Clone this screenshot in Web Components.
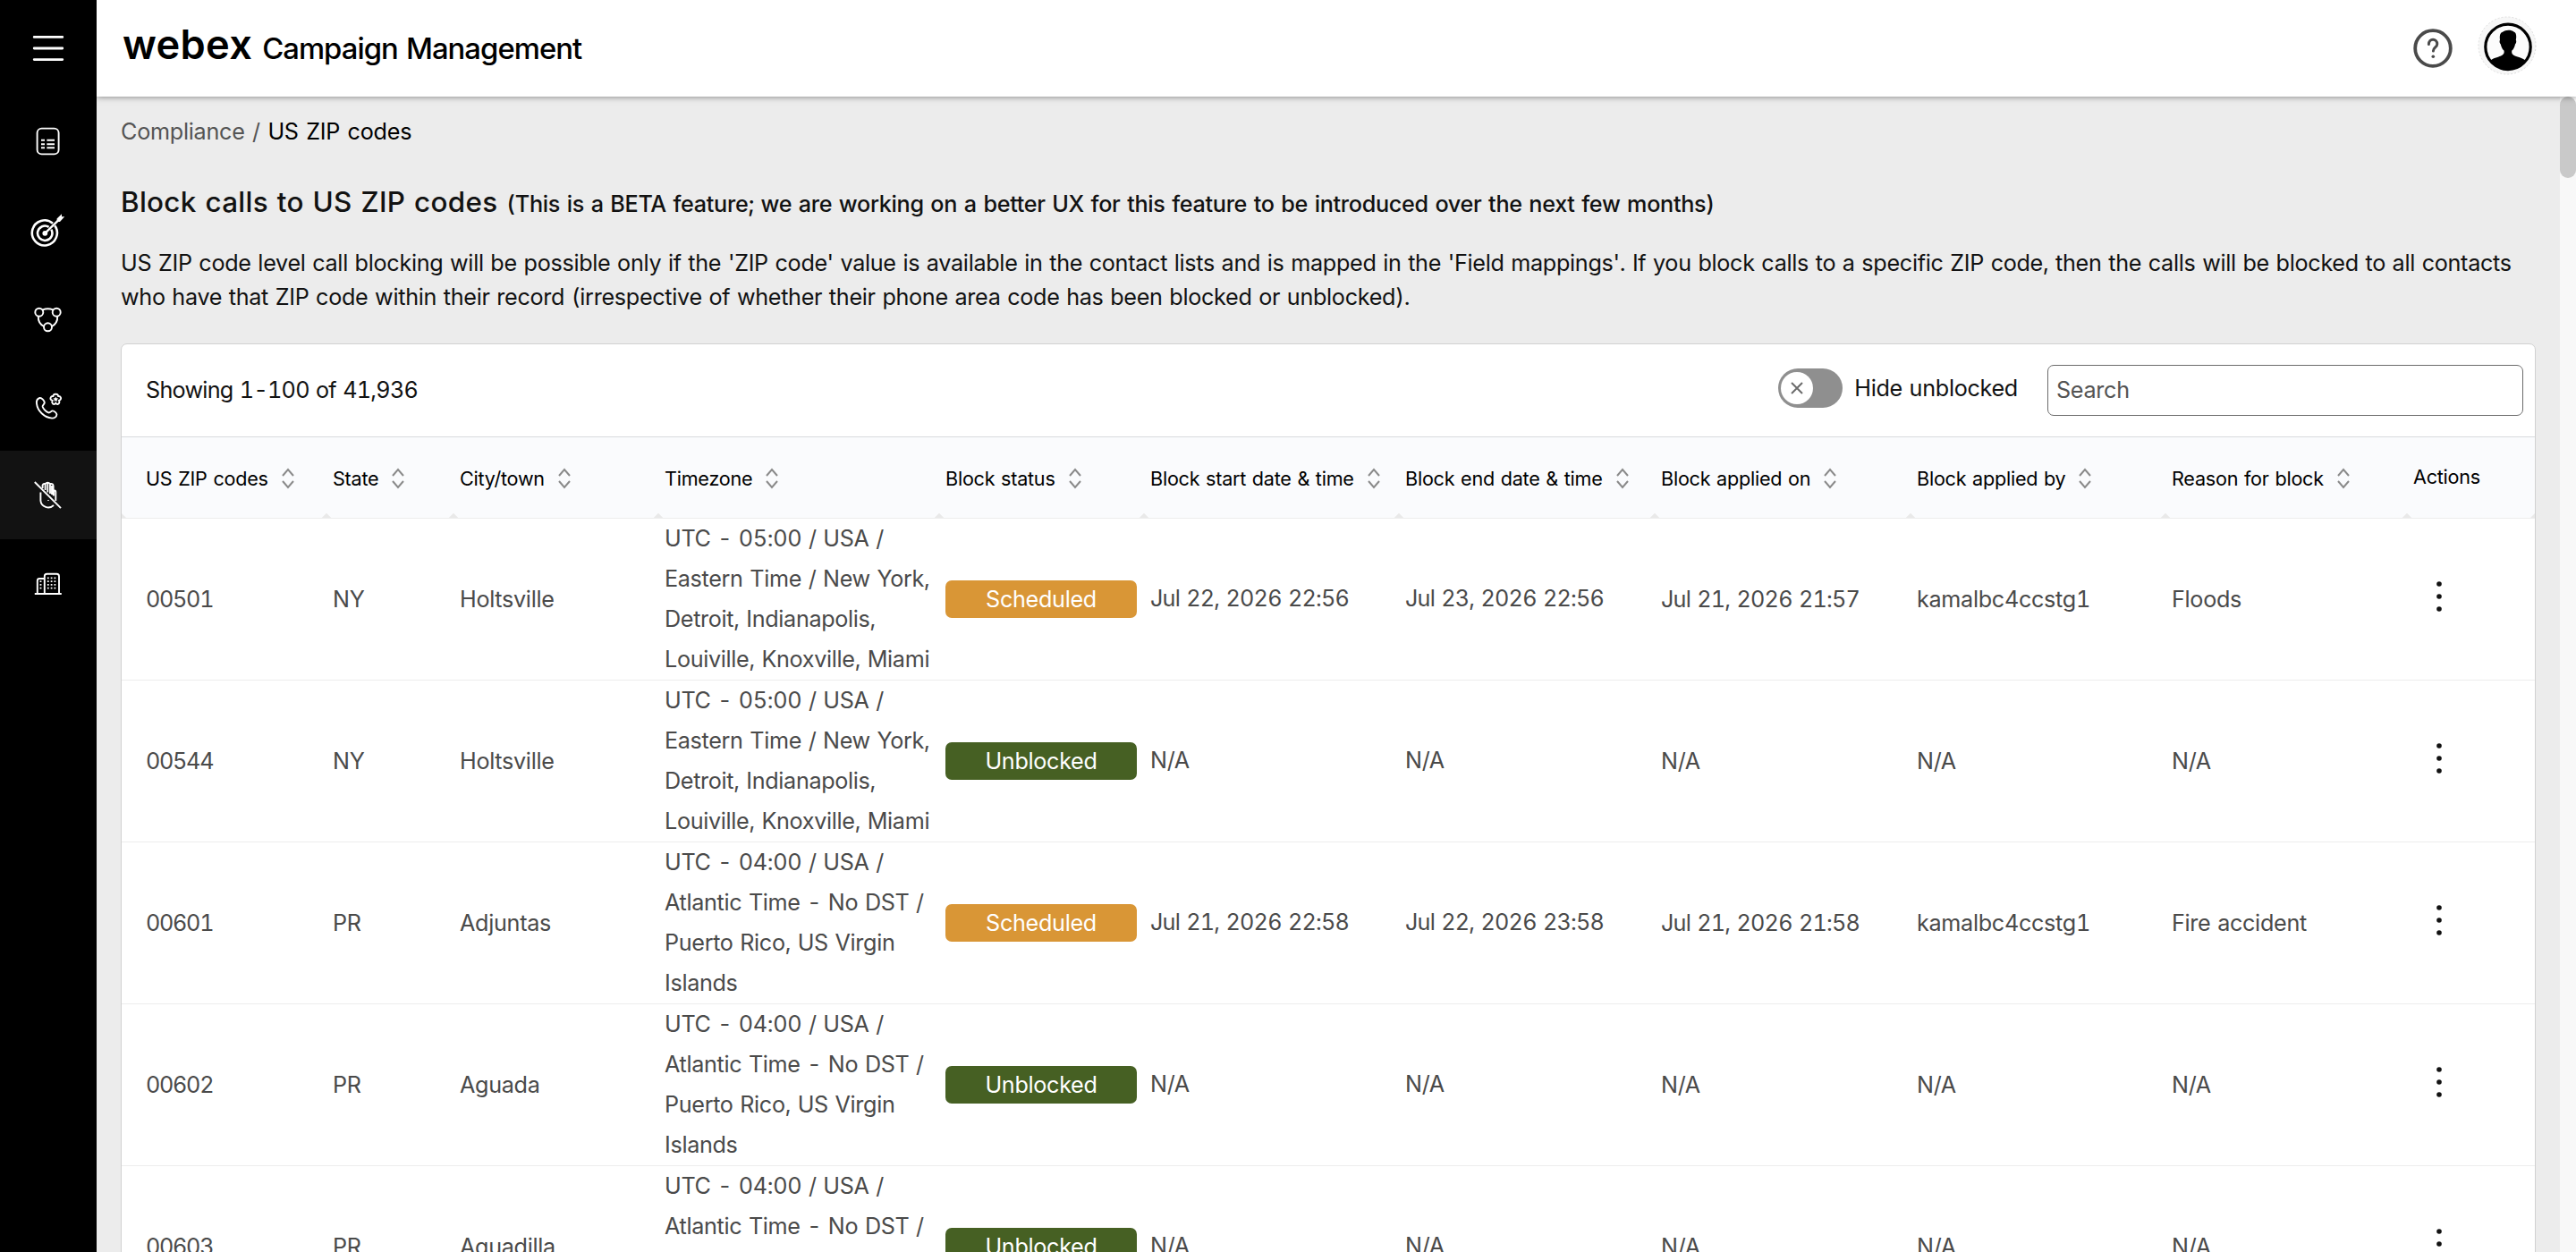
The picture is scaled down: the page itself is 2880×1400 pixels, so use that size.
<!DOCTYPE html>
<html lang="en">
<head>
<meta charset="utf-8">
<title>Webex Campaign Management</title>
<style>
  html, body {
    margin: 0;
    height: 100%;
    overflow: hidden;
    font-family: Inter, "Liberation Sans", sans-serif;
    font-size: 25.2px;
    font-variant-numeric: tabular-nums;
    letter-spacing: -0.31px;
    word-spacing: 1.2px;
    color: #121212;
  }
</style>
</head>
<body>
<campaign-shell></campaign-shell>

<script>
const icons = {
  survey: `
    <rect x="7.6" y="5.6" width="24" height="28.8" rx="5"/>
    <path d="M12 18.8h4M18.4 18.8h8.6M12 23.2h4M18.4 23.2h8.6M12 27.3h4M18.4 27.3h8.6"/>`,
  target: `
    <path stroke-width="2.6" d="M25 12.8A14 14 0 1 0 27.2 15.2"/>
    <path stroke-width="2.6" d="M20.6 16.8A8.2 8.2 0 1 0 23.3 19.6"/>
    <circle cx="16.3" cy="23.8" r="2.9" fill="#fff" stroke="none"/>
    <path stroke-width="2.4" d="M16.3 23.8L32 8.6"/>
    <path fill="#fff" stroke="none" d="M29.6 11V7.6L35 2.2V5.2H38.2L33 11Z"/>`,
  flow: `
    <circle cx="9.8" cy="13.2" r="4.5"/>
    <circle cx="29.2" cy="13.2" r="4.5"/>
    <circle cx="19.5" cy="29.8" r="4.5"/>
    <path d="M13.8 10.4Q19.5 8 25.2 10.4M8.8 17.8Q8.4 25.4 15 29M30.2 17.8Q30.6 25.4 24 29"/>`,
  phone: `
    <path d="M10.4 10C7.6 10.8 6.6 13.2 7 16.4C8 24.6 15.4 31.8 24 32.6C27 32.8 29.2 31 29.4 28.6C29.4 27 26.6 24.4 24.8 24.4C23 24.4 22.4 26.8 20.2 26.4C17.4 25.6 14.4 22.2 13.6 19.8C13.2 17.8 15.8 17 15.8 15.2C15.6 13 12.6 9.6 10.4 10Z"/>
    <path d="M28.3 5.8C30.2 5.6 31 7 31.2 8C33.4 7.8 34.6 9.8 34 11C33.6 12.4 32.6 12.6 32 12.8C33 15 32 16.8 30.4 17C29.4 17 28.8 16.6 28.3 15.8C27.4 17 26.2 17.2 25 16.4C24 15.4 24 14 24.6 12.8C22.4 12.2 22 10.6 22.8 9.2C23.4 8 24.4 7.8 25.4 8C25.6 6.8 26.6 5.6 28.3 5.8Z"/>
    <path fill="#fff" stroke="none" d="M28.3 8.4l.9 1.9 2 .3-1.5 1.4.4 2-1.8-1-1.8 1 .4-2-1.5-1.4 2-.3z"/>`,
  blocked: `
    <path d="M4.8 5L34 34.2"/>
    <path d="M11.4 16.5V26A8.6 8.2 0 0 0 26 31M28.3 26V16Q28 14 26 14.4V20.5"/>
    <path d="M13.6 12V8.4Q14.6 6.4 16.8 7.4M16.6 14V7Q19.3 4.2 22 7V18M19.3 6V16.6M22 7.2Q25.6 6.4 25.6 9.4V20M24 9V19"/>
    <path d="M20 25v1" stroke-width="1.6"/>`,
  building: `
    <path d="M4.8 31H34.8M7.8 31V16.4Q7.8 14 10.2 14H15.6M15.8 31V11.4Q15.8 8.8 18.4 8.8H29.4Q32 8.8 32 11.4V31"/>
    <path stroke-width="1.8" stroke-dasharray="1.8 2" d="M11.5 16.2V26M19.8 12.4V26M23.6 12.4V26M27.4 12.4V26"/>`
};

customElements.define('nav-item', class NavItem extends HTMLElement {
  constructor() {
    super();
    this.attachShadow({mode: 'open'});
  }
  connectedCallback() {
    this.shadowRoot.innerHTML = `<style>
      :host {
        display: flex;
        height: 99px;
        align-items: center;
        justify-content: center;
      }
      :host([active]) {
        background: #121212;
      }
      svg {
        width: 40px;
        height: 40px;
        fill: none;
        stroke: #fff;
        stroke-width: 1.9;
      }
    </style>
    <svg viewBox="0 0 40 40">${icons[this.getAttribute('icon')]}</svg>
    `;
  }
});

customElements.define('side-nav', class SideNav extends HTMLElement {
  constructor() {
    super();
    this.attachShadow({mode: 'open'});
    this.shadowRoot.innerHTML = this.template;
  }
  get template() {
    return `<style>
      :host {
        display: flex;
        flex-direction: column;
        flex: none;
        width: 108px;
        background: #000;
      }
      .menu {
        display: flex;
        height: 108px;
        align-items: center;
        justify-content: center;
      }
    </style>
    <span class="menu">
      <svg width="36" height="30" stroke="#fff" stroke-width="2.8" stroke-linecap="round"><path d="M2.2 2.4h31.6M2.2 15h31.6M2.2 27.6h31.6"/></svg>
    </span>
    <nav-item icon="survey"></nav-item>
    <nav-item icon="target"></nav-item>
    <nav-item icon="flow"></nav-item>
    <nav-item icon="phone"></nav-item>
    <nav-item icon="blocked" active></nav-item>
    <nav-item icon="building"></nav-item>
    `
  }
});

customElements.define('top-bar', class TopBar extends HTMLElement {
  constructor() {
    super();
    this.attachShadow({mode: 'open'});
    this.shadowRoot.innerHTML = this.template;
  }
  get template() {
    return `<style>
      :host {
        display: flex;
        flex: none;
        box-sizing: border-box;
        height: 108px;
        padding: 0 44px 0 29px;
        align-items: center;
        background: #fff;
        color: #000;
        box-shadow: 0 0 7px rgba(0, 0, 0, 0.5);
        z-index: 1;
      }
      .brand {
        display: flex;
        flex: 1;
        align-items: baseline;
        gap: 11px;
        line-height: 60px;
        margin-top: -5px;
      }
      .logo {
        font-size: 45.2px;
        font-weight: 600;
        letter-spacing: 0.3px;
      }
      .product {
        font-size: 32.8px;
        font-weight: 500;
        letter-spacing: -0.95px;
      }
      .help {
        margin-right: 28px;
      }
      .avatar {
        margin-top: -6px;
      }
    </style>
    <span class="brand">
      <span class="logo">webex</span>
      <span class="product">Campaign Management</span>
    </span>
    <svg class="help" width="44" height="44" fill="none" stroke="#4a4a4a">
      <circle cx="22" cy="22" r="19.8" stroke-width="3.8"/>
      <path d="M17.4 17.6C17.4 10.4 26.8 10.6 26.8 17.2C26.8 20.8 22.4 21 22.4 25" stroke-width="3" stroke-linecap="round"/>
      <circle cx="22.3" cy="31.2" r="1.8" fill="#4a4a4a" stroke="none"/>
    </svg>
    <svg class="avatar" width="66" height="66">
      <circle cx="33" cy="33" r="32" fill="#f7f7f7" stroke="#ddd" stroke-dasharray="2 2"/>
      <circle cx="34" cy="34.4" r="25.2" fill="#fcfcfc" stroke="#000" stroke-width="3.2"/>
      <path d="M14.6 49.5C18 45.8 29 45.4 29.6 41V38.8C27 36.4 26.4 33.6 25.8 31.4C24.2 30 24.4 28 25 26.4C24 20 26.6 18 28 17.8C31 15 38 15 40.4 17.6C43.8 18.6 43.4 24 42.8 26.6C43.6 28.4 43.2 30.4 42 31.4C41.4 34 40.6 36.6 38.2 38.8V41C38.8 45.4 49.8 45.8 53.2 49.5C48 57.6 41 60.2 34 60.2S20 57.6 14.6 49.5Z"/>
    </svg>
    `
  }
});

customElements.define('toggle-switch', class ToggleSwitch extends HTMLElement {
  constructor() {
    super();
    this.attachShadow({mode: 'open'});
    this.shadowRoot.innerHTML = this.template;
  }
  get template() {
    return `<style>
      :host {
        display: flex;
        align-items: center;
        gap: 13px;
      }
      .track {
        display: flex;
        box-sizing: border-box;
        width: 72px;
        height: 44px;
        padding: 0 3px;
        align-items: center;
        border-radius: 22px;
        background: #8f8f8f;
      }
      .knob {
        display: flex;
        width: 36px;
        height: 36px;
        align-items: center;
        justify-content: center;
        border-radius: 50%;
        background: #fff;
      }
    </style>
    <span class="track">
      <span class="knob">
        <svg width="14" height="14" stroke="#6b6b6b" stroke-width="2"><path d="M1 1l12 12M13 1L1 13"/></svg>
      </span>
    </span>
    <slot></slot>
    `
  }
});

customElements.define('search-field', class SearchField extends HTMLElement {
  constructor() {
    super();
    this.attachShadow({mode: 'open'});
    this.shadowRoot.innerHTML = this.template;
  }
  get template() {
    return `<style>
      :host {
        display: flex;
        box-sizing: border-box;
        width: 532px;
        height: 57px;
        padding: 0 9px;
        align-items: center;
        border: 1px solid #6b6b6b;
        border-radius: 7px;
        background: #fff;
        color: #545454;
      }
    </style>
    <slot></slot>
    `
  }
});

customElements.define('column-head', class ColumnHead extends HTMLElement {
  constructor() {
    super();
    this.attachShadow({mode: 'open'});
    this.shadowRoot.innerHTML = this.template;
  }
  get template() {
    return `<style>
      :host {
        display: flex;
        position: relative;
        box-sizing: border-box;
        height: 91px;
        padding: 3px 0 0 7px;
        align-items: center;
        gap: 15px;
        border-bottom: 1px solid #ededed;
        white-space: nowrap;
      }
      :host([first]) {
        padding-left: 27px;
      }
      :host([plain]) {
        padding-top: 0;
        padding-bottom: 1px;
      }
      :host([plain]) .sort {
        display: none;
      }
      /* resize notches in the bottom corners of a column */
      :host::before, :host::after {
        content: "";
        position: absolute;
        bottom: 0;
        border: 5px solid transparent;
        border-top: none;
        border-bottom-color: #e9e9e9;
      }
      :host::before {
        left: -5px;
      }
      :host::after {
        right: -5px;
      }
    </style>
    <slot></slot>
    <svg class="sort" width="14" height="24" fill="none" stroke="#8a8a8a" stroke-width="2"><path d="M1 9L7 2L13 9M1 15L7 22L13 15"/></svg>
    `
  }
});

customElements.define('status-badge', class StatusBadge extends HTMLElement {
  constructor() {
    super();
    this.attachShadow({mode: 'open'});
    this.shadowRoot.innerHTML = this.template;
  }
  get template() {
    return `<style>
      :host {
        display: flex;
        box-sizing: border-box;
        width: 214px;
        height: 42px;
        padding-top: 1px;
        align-items: center;
        justify-content: center;
        border-radius: 7px;
        background: #466023;
        color: #fff;
      }
      :host([kind="Scheduled"]) {
        background: #d99636;
      }
    </style>
    <slot></slot>
    `
  }
});

const columns = ['US ZIP codes', 'State', 'City/town', 'Timezone', 'Block status', 'Block start date &amp; time',
  'Block end date &amp; time', 'Block applied on', 'Block applied by', 'Reason for block', 'Actions'];

const eastern = 'UTC - 05:00 / USA / Eastern Time / New York, Detroit, Indianapolis, Louiville, Knoxville, Miami';
const atlantic = 'UTC - 04:00 / USA / Atlantic Time - No DST / Puerto Rico, US Virgin Islands';
const none = ['N/A', 'N/A', 'N/A', 'N/A', 'N/A'];

const rows = [
  ['00501', 'NY', 'Holtsville', eastern, 'Scheduled', 'Jul 22, 2026 22:56', 'Jul 23, 2026 22:56', 'Jul 21, 2026 21:57', 'kamalbc4ccstg1', 'Floods'],
  ['00544', 'NY', 'Holtsville', eastern, 'Unblocked', ...none],
  ['00601', 'PR', 'Adjuntas', atlantic, 'Scheduled', 'Jul 21, 2026 22:58', 'Jul 22, 2026 23:58', 'Jul 21, 2026 21:58', 'kamalbc4ccstg1', 'Fire accident'],
  ['00602', 'PR', 'Aguada', atlantic, 'Unblocked', ...none],
  ['00603', 'PR', 'Aguadilla', atlantic, 'Unblocked', ...none]
];

customElements.define('zip-table', class ZipTable extends HTMLElement {
  constructor() {
    super();
    this.attachShadow({mode: 'open'});
    this.shadowRoot.innerHTML = this.template;
  }
  row(cells) {
    return `<div class="row">
      ${cells.map((cell, i) => {
        if (i === 4) return `<span class="cell"><status-badge kind="${cell}">${cell}</status-badge></span>`;
        return `<span class="cell text c${i}${/^(Jul|\d)/.test(cell) ? ' num' : ''}">${cell}</span>`;
      }).join('')}
      <span class="cell">
        <svg class="more" width="6" height="36"><circle cx="3" cy="4" r="2.8"/><circle cx="3" cy="18" r="2.8"/><circle cx="3" cy="32" r="2.8"/></svg>
      </span>
    </div>`;
  }
  get template() {
    return `<style>
      :host {
        display: block;
      }
      .row {
        display: grid;
        grid-template-columns: 229px 142px 229px 314px 229px 285px 286px 286px 285px 270px 1fr;
      }
      .head {
        background: #fafbfd;
        font-size: 21.6px;
        letter-spacing: -0.24px;
        color: #000;
        overflow: hidden;
      }
      .row:not(.head) {
        height: 180px;
        border-bottom: 1px solid #ededed;
        color: #4a4a4a;
        line-height: 45px;
      }
      .cell {
        display: flex;
        padding-left: 7px;
        align-items: center;
      }
      .text {
        padding-top: 1px;
      }
      .num {
        letter-spacing: -0.78px;
      }
      .c0 {
        padding-left: 27px;
        letter-spacing: -1.3px;
      }
      .c3, .c5, .c6 {
        padding-top: 0;
      }
      .c3 {
        letter-spacing: -0.34px;
      }
      .c5, .c6 {
        padding-bottom: 1px;
      }
      .more {
        margin: -6px 0 0 26px;
        fill: #121212;
      }
    </style>
    <div class="row head">
      ${columns.map((name, i) => `<column-head${i === 0 ? ' first' : ''}${i === 10 ? ' plain' : ''}>${name}</column-head>`).join('')}
    </div>
    ${rows.map(cells => this.row(cells)).join('')}
    `
  }
});

customElements.define('zip-card', class ZipCard extends HTMLElement {
  constructor() {
    super();
    this.attachShadow({mode: 'open'});
    this.shadowRoot.innerHTML = this.template;
  }
  get template() {
    return `<style>
      :host {
        display: block;
        border: 1px solid #d1d1d1;
        border-radius: 7px;
        background: #fff;
        overflow: hidden;
      }
      .toolbar {
        display: flex;
        height: 103px;
        padding: 0 13px 0 27px;
        align-items: center;
        border-bottom: 1px solid #d8dadd;
      }
      .count {
        flex: 1;
        letter-spacing: -0.74px;
      }
      toggle-switch {
        margin: -4px 33px 0 0;
      }
    </style>
    <div class="toolbar">
      <span class="count">Showing 1-100 of 41,936</span>
      <toggle-switch>Hide unblocked</toggle-switch>
      <search-field>Search</search-field>
    </div>
    <zip-table></zip-table>
    `
  }
});

customElements.define('zip-page', class ZipPage extends HTMLElement {
  constructor() {
    super();
    this.attachShadow({mode: 'open'});
    this.shadowRoot.innerHTML = this.template;
  }
  get template() {
    return `<style>
      :host {
        display: flex;
        flex: 1;
        min-height: 0;
        background: #ececec;
      }
      .content {
        flex: 1;
        min-width: 0;
        padding: 20px 27px 0 27px;
        overflow: hidden;
      }
      .crumbs {
        line-height: 38px;
        letter-spacing: -0.27px;
        word-spacing: 2px;
        color: #545454;
      }
      .crumbs b {
        font-weight: 400;
        color: #000;
      }
      h1 {
        margin: 38px 0 0;
        font-size: 31.4px;
        line-height: 44px;
        font-weight: 550;
        letter-spacing: 0.28px;
      }
      h1 small {
        font-size: 25.2px;
        font-weight: 500;
        line-height: 1;
        letter-spacing: -0.31px;
      }
      p {
        margin: 28px 0 32.4px;
        line-height: 37.8px;
      }
      .scrollbar {
        flex: none;
        width: 18px;
        background: #f8f8f8;
      }
      .thumb {
        height: 91px;
        border-radius: 9px;
        background: #c9c9c9;
      }
    </style>
    <div class="content">
      <div class="crumbs">Compliance / <b>US ZIP codes</b></div>
      <h1>Block calls to US ZIP codes <small>(This is a BETA feature; we are working on a better UX for this feature to be introduced over the next few months)</small></h1>
      <p>US ZIP code level call blocking will be possible only if the 'ZIP code' value is available in the contact lists and is mapped in the 'Field mappings'. If you block calls to a specific ZIP code, then the calls will be blocked to all contacts who have that ZIP code within their record (irrespective of whether their phone area code has been blocked or unblocked).</p>
      <zip-card></zip-card>
    </div>
    <div class="scrollbar"><div class="thumb"></div></div>
    `
  }
});

customElements.define('campaign-shell', class CampaignShell extends HTMLElement {
  constructor() {
    super();
    this.attachShadow({mode: 'open'});
    this.shadowRoot.innerHTML = this.template;
  }
  get template() {
    return `<style>
      :host {
        display: flex;
        width: 100%;
        height: 100%;
        overflow: hidden;
      }
      main {
        display: flex;
        flex: 1;
        flex-direction: column;
        min-width: 0;
        overflow: hidden;
      }
    </style>
    <side-nav></side-nav>
    <main>
      <top-bar></top-bar>
      <zip-page></zip-page>
    </main>
    `
  }
});
</script>
</body>
</html>
